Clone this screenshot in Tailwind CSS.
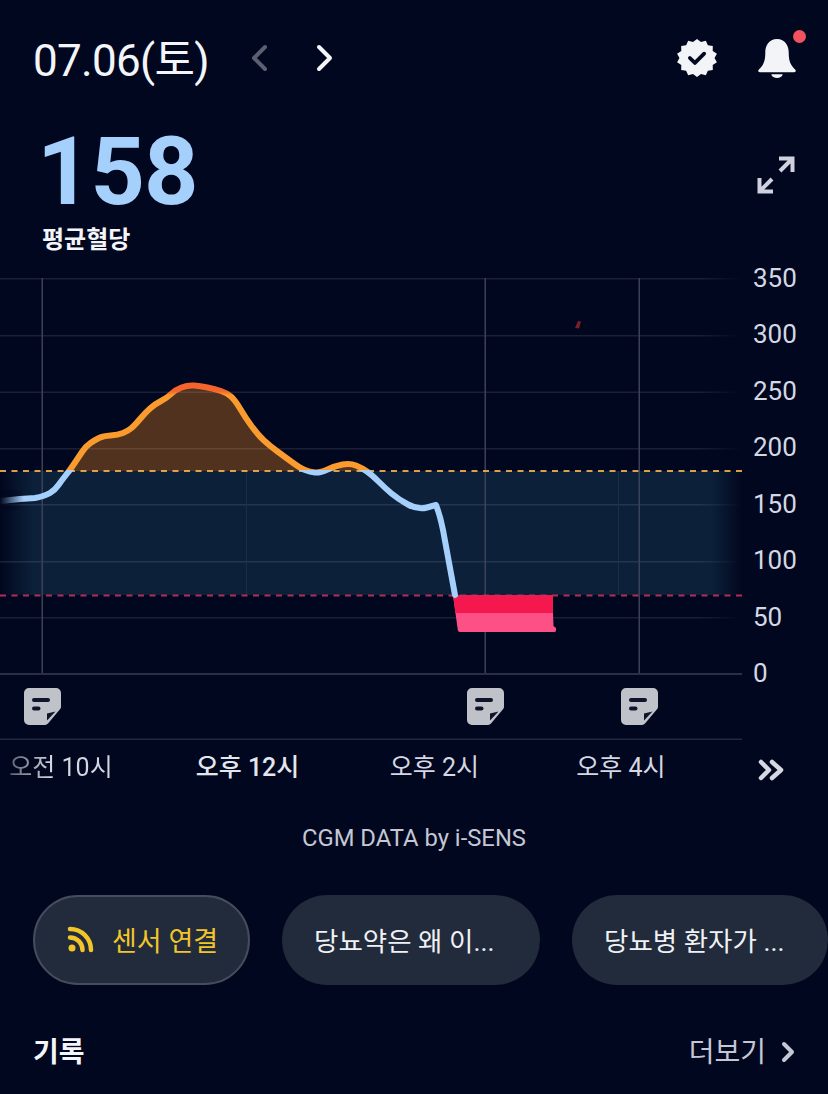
<!DOCTYPE html>
<html lang="ko">
<head>
  <meta charset="UTF-8" />
  <meta name="viewport" content="width=device-width, initial-scale=1" />
  <title>07.06 혈당</title>
  <script src="https://cdn.jsdelivr.net/npm/@tailwindcss/browser@4"></script>
</head>
<body class="bg-[#01071f]">
  <div class="w-[828px] h-[1094px] overflow-hidden flex flex-col bg-[#01071f] text-white font-['Roboto','Noto_Sans_CJK_KR',sans-serif]">

    <!-- header -->
    <div class="h-[120px] flex items-center pl-[33px] pr-[31px] pt-[1px]">
      <h1 class="text-[44px] leading-none tracking-[-0.7px] text-[#f4f5f9] w-[215px] whitespace-nowrap">07.06(토)</h1>
      <svg class="w-[24px] h-[30px] mr-[40px] mb-[5px]" viewBox="0 0 24 30" fill="none" stroke="#5b5f70" stroke-width="4" stroke-linecap="round" stroke-linejoin="round"><path d="M17 4 L6 15 L17 26" /></svg>
      <svg class="w-[24px] h-[30px] mb-[5px]" viewBox="0 0 24 30" fill="none" stroke="#f4f5f9" stroke-width="4" stroke-linecap="round" stroke-linejoin="round"><path d="M7 4 L18 15 L7 26" /></svg>
      <div class="ml-auto flex items-center mb-[5px]">
        <svg class="w-[40px] h-[40px] mr-[40px]" viewBox="0 0 42 42">
          <path fill="#f3f4f8" d="M21 1l4.200 3.200 5.100-1.400 2.100 4.800 5.200.7-.1 5.300 4.400 2.900-2.500 4.500 2.500 4.500-4.400 2.900.1 5.300-5.200.7-2.100 4.800-5.100-1.400L21 41l-4.200-3.200-5.100 1.400-2.100-4.800-5.200-.7.1-5.300L.1 25.500 2.600 21 .1 16.500l4.400-2.900-.1-5.300 5.200-.7 2.100-4.800 5.100 1.400z" />
          <path d="M13.500 21l5.300 5.200 9.700-9.700" fill="none" stroke="#050a22" stroke-width="4" stroke-linecap="round" stroke-linejoin="round" />
        </svg>
        <div class="relative w-[40px] h-[40px]">
          <svg class="w-[40px] h-[40px]" viewBox="0 0 42 42">
            <path fill="#f3f4f8" d="M21 1C12.500 1 8.700 8 8.700 15c0 9-1.700 13.500-6.700 18C.8 34 1 36 3 36h36c2 0 2.200-2 1-3-5-4.500-6.700-9-6.700-18C33.300 8 29.500 1 21 1z" />
            <path fill="#f3f4f8" d="M15 38h12c-.6 2.700-3 4-6 4s-5.400-1.300-6-4z" />
          </svg>
          <span class="absolute -top-[8px] right-[-9px] w-[13px] h-[13px] rounded-full bg-[#f2525f]"></span>
        </div>
      </div>
    </div>

    <!-- average -->
    <div class="h-[158px] relative pl-[37px]">
      <div class="text-[95px] leading-none font-bold text-[#a6d0fc] tracking-[-1px] mt-[4px]">158</div>
      <div class="text-[24px] leading-none font-bold text-[#f4f5f9] ml-[5px] mt-[9px]">평균혈당</div>
      <svg class="absolute right-[33px] top-[36px] w-[38px] h-[38px]" viewBox="0 0 38 38" fill="none" stroke="#cfd1de" stroke-width="4">
        <path d="M22 2.500h13.500V16M35 3L23 15M2.500 22v13.500H16M3 35l12-12" />
      </svg>
    </div>

    <!-- chart -->
    <div class="flex h-[462px]">
      <svg class="w-[742px] h-[462px] shrink-0" viewBox="0 278 742 462">
        <defs>
          <linearGradient id="bandFade" x1="0" y1="0" x2="742" y2="0" gradientUnits="userSpaceOnUse">
            <stop offset="0" stop-color="#0c2039" stop-opacity="0" />
            <stop offset=".045" stop-color="#0c2039" />
            <stop offset=".96" stop-color="#0c2039" />
            <stop offset="1" stop-color="#0c2039" stop-opacity="0" />
          </linearGradient>
          <linearGradient id="lineFade" x1="0" y1="0" x2="742" y2="0" gradientUnits="userSpaceOnUse">
            <stop offset="0" stop-color="#fff" stop-opacity=".1" />
            <stop offset=".94" stop-color="#fff" stop-opacity=".1" />
            <stop offset="1" stop-color="#fff" stop-opacity="0" />
          </linearGradient>
          <linearGradient id="curve" x1="0" y1="380" x2="0" y2="600" gradientUnits="userSpaceOnUse">
            <stop offset=".05" stop-color="#f4642c" />
            <stop offset=".07" stop-color="#fb9b2e" />
            <stop offset=".41" stop-color="#fb9b2e" />
            <stop offset=".41" stop-color="#a6d0fc" />
          </linearGradient>
          <linearGradient id="curveStart" x1="0" y1="0" x2="30" y2="0" gradientUnits="userSpaceOnUse">
            <stop offset="0" stop-color="#01071f" />
            <stop offset=".8" stop-color="#01071f" stop-opacity="0" />
          </linearGradient>
        </defs>

        <rect x="0" y="471" width="742" height="124" fill="url(#bandFade)" />
        <path fill="#51321f" d="M67 471 74 464 82 452 90.500 443 99 438 110.500 435.500 123 433 131.500 428 140 419 150 408.500 161 401 171 394 181.500 387.500 194 385.500 207.500 387.500 221 391 231 396.500 240 408.500 251.500 426 264 440.500 277.500 451.500 292.500 462.500 306 471z M338 471 342.500 464.500 356 465.500 367 471z" />

        <!-- grid -->
        <g fill="url(#lineFade)">
          <rect x="0" y="278" width="742" height="1.500" />
          <rect x="0" y="335" width="742" height="1.500" />
          <rect x="0" y="391.500" width="742" height="1.500" />
          <rect x="0" y="448" width="742" height="1.500" />
          <rect x="0" y="504" width="742" height="1.500" />
          <rect x="0" y="561" width="742" height="1.500" />
          <rect x="0" y="617" width="742" height="1.500" />
        </g>
        <rect x="0" y="673" width="742" height="2" fill="#2b2f43" />
        <rect x="0" y="738.500" width="742" height="2" fill="#24283c" />
        <rect x="41.500" y="278" width="1.500" height="395" fill="#3c4156" />
        <rect x="484.500" y="278" width="1.500" height="395" fill="#3c4156" />
        <rect x="638.500" y="278" width="1.500" height="395" fill="#3c4156" />
        <rect x="246" y="471" width="1" height="124" fill="#1c2f47" />
        <rect x="618" y="471" width="1" height="124" fill="#1c2f47" />

        <!-- low block -->
        <path fill="#fd5086" d="M453 595H553V613L553.500 626 556 628V630.500Q556 632 554 632H460Q458 632 457.800 630z" />
        <path fill="#f5184f" d="M453 595H553V613H455.500z" />

        <!-- limits -->
        <path d="M0 471H742" stroke="#f2b04f" stroke-width="2" stroke-dasharray="6 5.500" opacity=".9" />
        <path d="M0 595.500H742" stroke="#c9305f" stroke-width="2" stroke-dasharray="6 5.500" opacity=".9" />

        <!-- glucose curve -->
        <path fill="none" stroke="url(#curve)" stroke-width="6" stroke-linejoin="round" stroke-linecap="round" d="M1 501L20 499 35 498Q45 496 50 493Q55 490 58.500 485Q62 480 66 475Q70 470 74 464Q78 458 82 452Q86 446 90.500 443Q95 440 99 438Q103 436 110.500 435.500Q118 435 123 433Q128 431 131.500 428Q135 425 140 419Q145 413 150 408.500Q155 404 161 401Q167 398 171 394Q175 390 181.500 387.500Q188 385 194 385.500Q200 386 207.500 387.500Q215 389 221 391Q227 393 231 396.500Q235 400 240 408.500Q245 417 251.500 426Q258 435 264 440.500Q270 446 277.500 451.500Q285 457 292.500 462.500Q300 468 305 470Q310 472 315 472.500Q320 473 327.500 469.500Q335 466 342.500 464.500Q350 463 356 465.500Q362 468 367 471.500Q372 475 378.500 481.500Q385 488 391.500 493.500Q398 499 408 504.500Q418 510 427 507.500L436 505Q440 515 443 530L455 595" />
        <rect x="0" y="490" width="30" height="20" fill="url(#curveStart)" />
        <path d="M575 328l3-7 3 .5-2 7z" fill="#7d1d2a" />

        <!-- memos -->
        <g transform="translate(24 688)">
          <path fill="#c0c2ca" d="M5 0H32a5 5 0 0 1 5 5V19a3 3 0 0 1-.8 2L24 35.500a4 4 0 0 1-3 1.500H5a5 5 0 0 1-5-5V5a5 5 0 0 1 5-5z" />
          <path fill="#10142a" d="M23 32.500V25.500l8.500-2z" />
          <rect x="8" y="10" width="18" height="4" rx="2" fill="#10142a" />
          <rect x="8" y="18.500" width="8.500" height="4" rx="2" fill="#10142a" />
        </g>
        <g transform="translate(467 688)">
          <path fill="#c0c2ca" d="M5 0H32a5 5 0 0 1 5 5V19a3 3 0 0 1-.8 2L24 35.500a4 4 0 0 1-3 1.500H5a5 5 0 0 1-5-5V5a5 5 0 0 1 5-5z" />
          <path fill="#10142a" d="M23 32.500V25.500l8.500-2z" />
          <rect x="8" y="10" width="18" height="4" rx="2" fill="#10142a" />
          <rect x="8" y="18.500" width="8.500" height="4" rx="2" fill="#10142a" />
        </g>
        <g transform="translate(621 688)">
          <path fill="#c0c2ca" d="M5 0H32a5 5 0 0 1 5 5V19a3 3 0 0 1-.8 2L24 35.500a4 4 0 0 1-3 1.500H5a5 5 0 0 1-5-5V5a5 5 0 0 1 5-5z" />
          <path fill="#10142a" d="M23 32.500V25.500l8.500-2z" />
          <rect x="8" y="10" width="18" height="4" rx="2" fill="#10142a" />
          <rect x="8" y="18.500" width="8.500" height="4" rx="2" fill="#10142a" />
        </g>
      </svg>

      <!-- y axis -->
      <div class="flex flex-col mt-[-28.5px] pl-[11px] text-[26px] text-[#d5d8e2]">
        <span class="h-[56.5px] leading-[56.5px]">350</span>
        <span class="h-[56.5px] leading-[56.5px]">300</span>
        <span class="h-[56.5px] leading-[56.5px]">250</span>
        <span class="h-[56.5px] leading-[56.5px]">200</span>
        <span class="h-[56.5px] leading-[56.5px]">150</span>
        <span class="h-[56.5px] leading-[56.5px]">100</span>
        <span class="h-[56.5px] leading-[56.5px]">50</span>
        <span class="h-[56.5px] leading-[56.5px]">0</span>
      </div>
    </div>

    <!-- x axis -->
    <div class="h-[56px] flex items-center text-[25px] text-[#d5d8e2] ml-[-32px] whitespace-nowrap">
      <span class="w-[186px] text-center"><span class="bg-linear-to-r from-[#5d6070] to-[#d5d8e2] to-40% bg-clip-text text-transparent">오전 10시</span></span>
      <span class="w-[187px] text-center font-medium text-[#e4e6ee]">오후 12시</span>
      <span class="w-[187px] text-center">오후 2시</span>
      <span class="w-[186px] text-center">오후 4시</span>
      <svg class="w-[26px] h-[22px] ml-[44px] mt-[3px]" viewBox="0 0 26 22" fill="none" stroke="#d5d8e2" stroke-width="4.500" stroke-linejoin="round" stroke-linecap="round"><path d="M3 3l8 8-8 8M14 3l9 8-9 8" /></svg>
    </div>

    <div class="text-center text-[23.800px] leading-none text-[#c5c8d4] mt-[31px]">CGM DATA by i-SENS</div>

    <!-- chips -->
    <div class="flex gap-[32px] pl-[33px] mt-[44px] text-[27px] whitespace-nowrap">
      <div class="w-[217px] h-[90px] shrink-0 rounded-full bg-[#212b3b] border-2 border-[#454c5c] flex items-center pl-[32px] text-[#f2c529]">
        <svg class="w-[27px] h-[27px] mr-[18px]" viewBox="0 0 27 27" fill="none" stroke="#f2c529" stroke-width="4.500" stroke-linecap="round">
          <circle cx="5" cy="22" r="3.500" fill="#f2c529" stroke="none" />
          <path d="M3 11.500a12.500 12.500 0 0 1 12.500 12.500M3 3a21 21 0 0 1 21 21" />
        </svg>
        <span class="pt-[5px]">센서 연결</span>
      </div>
      <div class="w-[258px] h-[90px] shrink-0 rounded-full bg-[#212b3b] flex items-center pl-[32px] pt-[5px] text-[26.500px] text-[#f0f1f5]">당뇨약은 왜 이...</div>
      <div class="w-[256px] h-[90px] shrink-0 rounded-full bg-[#212b3b] flex items-center pl-[32px] pt-[5px] text-[26.500px] text-[#f0f1f5]">당뇨병 환자가 ...</div>
    </div>

    <!-- section header -->
    <div class="flex items-center justify-between pl-[33px] pr-[33px] mt-[54px]">
      <h2 class="text-[28px] leading-none font-bold text-[#f4f5f9]">기록</h2>
      <div class="flex items-center text-[28px] leading-none text-[#c5c8d4]">
        <span>더보기</span>
        <svg class="w-[14px] h-[22px] ml-[15px] mb-[2px]" viewBox="0 0 14 22" fill="none" stroke="#c5c8d4" stroke-width="4" stroke-linecap="round" stroke-linejoin="round"><path d="M3 3l8 8-8 8" /></svg>
      </div>
    </div>
  </div>
</body>
</html>
